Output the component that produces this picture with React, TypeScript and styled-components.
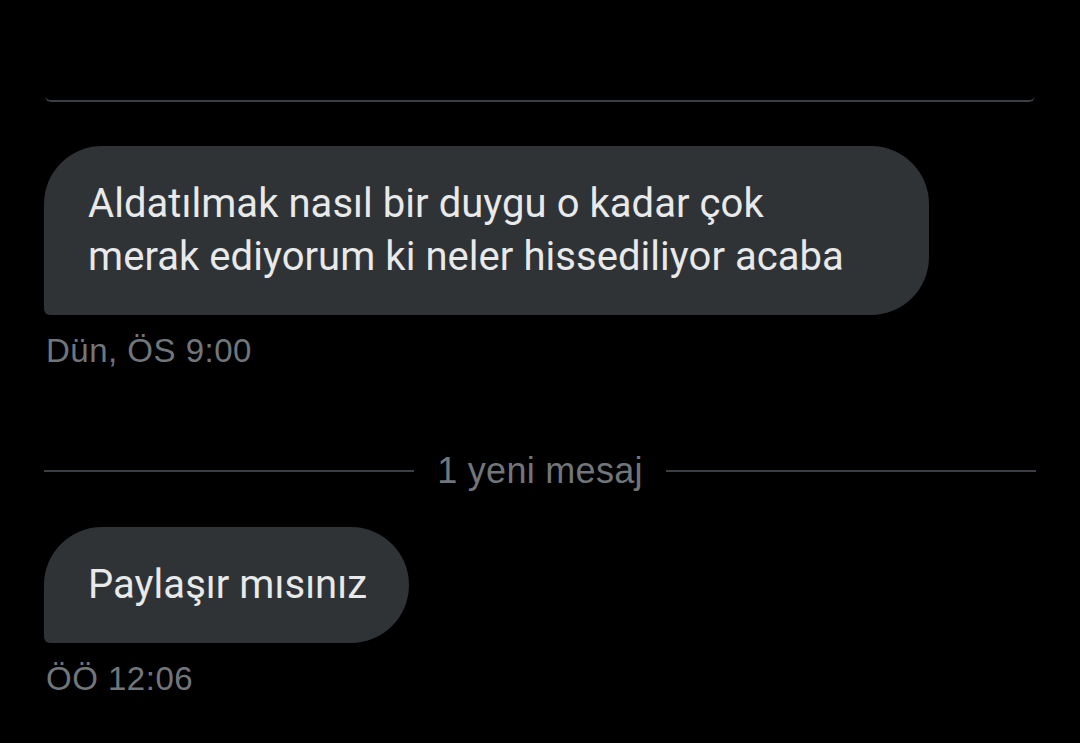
import React from "react";
import styled, { createGlobalStyle } from "styled-components";

const Global = createGlobalStyle`
  html, body { margin: 0; padding: 0; background: #000; }
  body { font-family: "Roboto", "Liberation Sans", sans-serif; -webkit-font-smoothing: antialiased; }
  * { box-sizing: border-box; }
`;

const Page = styled.div`
  width: 1080px;
  height: 743px;
  background: #000;
  padding: 0 44px 0 44px;
  display: flex;
  flex-direction: column;
  overflow: hidden;
`;

const TopEdge = styled.div`
  height: 102px;
  margin: 0 1px 0 1px;
  border-bottom: 2px solid #3b3e42;
  border-radius: 0 0 6px 6px;
  flex-shrink: 0;
`;

const Message = styled.div<{ $top: number }>`
  display: flex;
  flex-direction: column;
  align-items: flex-start;
  margin-top: ${(p) => p.$top}px;
`;

const Bubble = styled.div<{ $width?: number }>`
  background: #2f3336;
  color: #e7e9ea;
  border-radius: 58px 58px 58px 6px;
  padding: 31px 42px 32px 44px;
  width: ${(p) => (p.$width ? `${p.$width}px` : "auto")};
  font-size: 40px;
  line-height: 53px;
  letter-spacing: 0.05px;
`;

const Time = styled.div`
  margin-top: 16px;
  color: #71767b;
  font-family: "Liberation Sans", Arial, sans-serif;
  font-size: 33px;
  line-height: 40px;
  letter-spacing: 0.5px;
  padding-left: 2px;
`;

const Divider = styled.div`
  display: flex;
  align-items: center;
  gap: 23px;
  margin-top: 80px;
  height: 40px;
`;

const Rule = styled.div`
  flex: 1;
  height: 2px;
  background: #3b3e42;
`;

const DividerLabel = styled.span`
  color: #71767b;
  font-family: "Liberation Sans", Arial, sans-serif;
  font-size: 36px;
  line-height: 40px;
  letter-spacing: 0.3px;
  white-space: nowrap;
`;

export default function App() {
  return (
    <>
      <Global />
      <Page>
        <TopEdge />
        <Message $top={44}>
          <Bubble $width={885}>
            Aldatılmak nasıl bir duygu o kadar çok
            <br />
            merak ediyorum ki neler hissediliyor acaba
          </Bubble>
          <Time>Dün, ÖS 9:00</Time>
        </Message>
        <Divider>
          <Rule />
          <DividerLabel>1 yeni mesaj</DividerLabel>
          <Rule />
        </Divider>
        <Message $top={36}>
          <Bubble>Paylaşır mısınız</Bubble>
          <Time>ÖÖ 12:06</Time>
        </Message>
      </Page>
    </>
  );
}
